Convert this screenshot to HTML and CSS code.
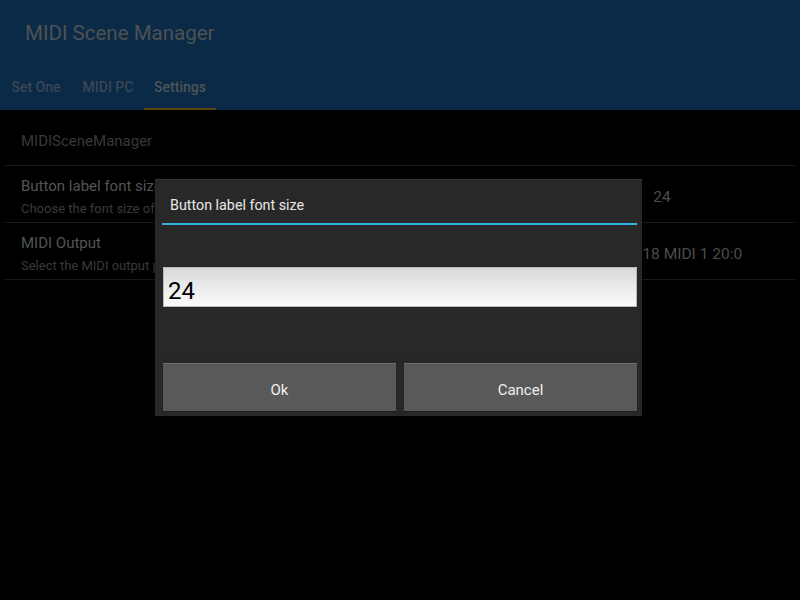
FILE: index.html
```html
<!DOCTYPE html>
<html>
<head>
<meta charset="utf-8">
<link rel="stylesheet" href="styles.css">
</head>
<body>
<div class="app">
  <header class="appbar">
    <div class="apptitle">MIDI Scene Manager</div>
    <nav class="tabs">
      <div class="tab">Set One</div>
      <div class="tab">MIDI PC</div>
      <div class="tab active">Settings</div>
    </nav>
  </header>
  <main class="prefs">
    <div class="category">MIDISceneManager</div>
    <div class="pref">
      <div class="pref-text">
        <div class="pref-title">Button label font size</div>
        <div class="pref-summary">Choose the font size of the button labels</div>
      </div>
      <div class="pref-value">24</div>
    </div>
    <div class="pref">
      <div class="pref-text">
        <div class="pref-title">MIDI Output</div>
        <div class="pref-summary">Select the MIDI output port</div>
      </div>
      <div class="pref-value">X18 / XR18 MIDI 1 20:0</div>
    </div>
  </main>
</div>
<div class="dialog">
  <div class="dlg-title">Button label font size</div>
  <div class="dlg-rule"></div>
  <div class="dlg-body">
    <div class="dlg-input">24</div>
  </div>
  <div class="dlg-buttons">
    <div class="btn">Ok</div>
    <div class="btn">Cancel</div>
  </div>
</div>
</body>
</html>
```
FILE: styles.css
```css
html, body {
  margin: 0;
  padding: 0;
  background: #000;
  font-family: Roboto, "Noto Sans", sans-serif;
}
.app {
  width: 800px;
  height: 600px;
  background: #000;
}
.appbar {
  background: #0b2a47;
  height: 110px;
  display: flex;
  flex-direction: column;
}
.apptitle {
  height: 66px;
  display: flex;
  align-items: center;
  padding-left: 25px;
  font-size: 20.5px;
  color: #4e5154;
}
.tabs {
  display: flex;
  height: 44px;
}
.tab {
  width: 72px;
  display: flex;
  align-items: center;
  justify-content: center;
  font-size: 14px;
  font-weight: 500;
  color: #3a4654;
  box-sizing: border-box;
  padding-bottom: 3px;
}
.tab.active {
  color: #4f5457;
  border-bottom: 2px solid #5a4510;
  padding-bottom: 1px;
}
.prefs {
  margin: 0 5px;
}
.category {
  height: 56px;
  box-sizing: border-box;
  padding: 22px 0 0 16px;
  font-size: 15px;
  color: #393939;
  border-bottom: 1px solid #1b1b1b;
}
.pref {
  height: 57px;
  box-sizing: border-box;
  border-bottom: 1px solid #1b1b1b;
  display: flex;
  align-items: flex-start;
  padding-top: 10px;
}
.pref-text {
  flex: 1;
  padding-left: 16px;
}
.pref-title {
  font-size: 15px;
  color: #545454;
  line-height: 20px;
}
.pref-summary {
  font-size: 13px;
  color: #3a3a3a;
  line-height: 26px;
}
.pref-value {
  width: 170px;
  margin-right: 48px;
  padding-top: 11px;
  text-align: center;
  font-size: 15.5px;
  line-height: 20px;
  color: #4c4c4c;
}
.dialog {
  position: absolute;
  left: 155px;
  top: 179px;
  width: 487px;
  height: 237px;
  box-sizing: border-box;
  background: #282828;
  border-top: 1px solid #333;
  box-shadow: 0 1px 2px rgba(0,0,0,0.8);
  padding: 0 5px 0 7px;
  display: flex;
  flex-direction: column;
}
.dlg-title {
  height: 43px;
  display: flex;
  align-items: center;
  padding-left: 8px;
  padding-top: 6px;
  box-sizing: border-box;
  font-size: 14.3px;
  color: #e8e8e8;
}
.dlg-rule {
  height: 2px;
  background: #33b5e5;
}
.dlg-body {
  height: 128px;
  box-sizing: border-box;
  padding: 42px 0 0 1px;
}
.dlg-input {
  height: 40px;
  box-sizing: border-box;
  border: 1px solid #b8b8b8;
  background: linear-gradient(#d9d9d9, #e9e9e9 45%, #fbfbfb);
  font-size: 24px;
  color: #000;
  padding: 9px 0 0 4px;
  line-height: 28px;
}
.dlg-buttons {
  border-top: 1px solid #232323;
  display: flex;
  gap: 8px;
  padding: 9px 0 0 1px;
}
.btn {
  flex: 1;
  height: 48px;
  box-sizing: border-box;
  background: #595959;
  border-top: 1px solid #707070;
  box-shadow: 0 1px 1px #1e1e1e;
  display: flex;
  align-items: center;
  justify-content: center;
  padding-top: 4px;
  font-size: 15px;
  color: #f0f0f0;
}
```
